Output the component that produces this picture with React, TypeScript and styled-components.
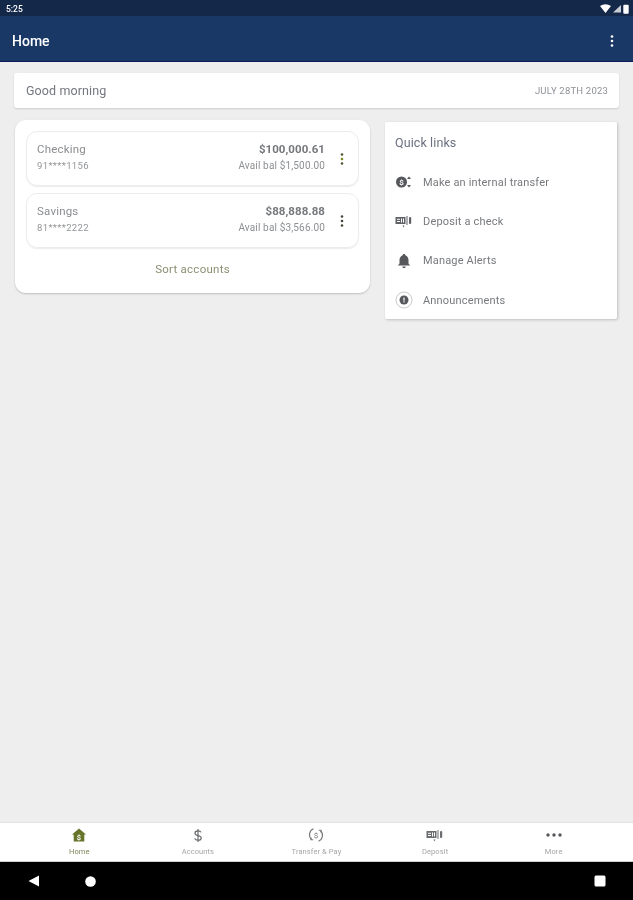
import React from "react";
import styled, { createGlobalStyle } from "styled-components";

const Global = createGlobalStyle`
  html, body { margin: 0; padding: 0; background: #eeeeee; }
  body { font-family: Roboto, "Liberation Sans", sans-serif; }
`;

const Screen = styled.div`
  width: 633px; height: 900px; display: flex; flex-direction: column; overflow: hidden; background: #eeeeee;
  filter: blur(0.45px);
`;
const StatusBar = styled.div`
  flex: none; height: 16px; background: #14284a; display: flex; align-items: center; justify-content: space-between;
  padding: 1px 4px 0 6px; box-sizing: border-box; color: #fff; font-size: 8.5px; font-weight: 500;
`;
const StatusIcons = styled.div`display: flex; align-items: center; gap: 2px;`;
const AppBar = styled.header`
  flex: none; height: 46px; box-sizing: border-box; background: #1a3866; border-bottom: 1.5px solid #0c1c58; display: flex; align-items: center;
  justify-content: space-between; padding: 4px 19px 0 12px; color: #fff;
`;
const AppTitle = styled.div`font-size: 14px; font-weight: 500;`;
const Content = styled.main`
  flex: 1 1 0; display: flex; flex-direction: column; padding: 11px 14px 0 14px; min-height: 0;
`;
const GreetingCard = styled.section`
  height: 35px; background: #fff; border-radius: 3px; box-shadow: 0 1px 2px rgba(0,0,0,.14);
  display: flex; align-items: center; justify-content: space-between; padding: 0 11px 0 12px;
`;
const Greeting = styled.div`font-size: 12.5px; color: #74777f; letter-spacing: .1px;`;
const DateText = styled.div`font-size: 9.5px; color: #8f9197; letter-spacing: .2px;`;
const Columns = styled.div`display: flex; align-items: flex-start; margin-top: 12px; padding: 0 2px 0 1px; gap: 15px;`;
const AccountsCard = styled.section`
  width: 355px; height: 173px; box-sizing: border-box; background: #fff; border-radius: 11px;
  box-shadow: 0 1px 2px rgba(0,0,0,.2); padding: 11px 11px 0; display: flex; flex-direction: column; gap: 7px;
`;
const AccountRow = styled.div`
  height: 55px; box-sizing: border-box; border-radius: 11px; border: 1px solid #ececec;
  box-shadow: 0 1px 1px rgba(0,0,0,.08); display: flex; align-items: center; padding: 0 14px 0 10px; gap: 15px;
`;
const AccountInfo = styled.div`flex: 1; display: flex; flex-direction: column; gap: 4px; margin-top: -5px;`;
const InfoLine = styled.div`display: flex; justify-content: space-between; align-items: baseline;`;
const AccountName = styled.span`font-size: 11.5px; color: #8b8d90; letter-spacing: .2px;`;
const Amount = styled.span`font-size: 11.5px; font-weight: 700; color: #76787c; letter-spacing: .05px;`;
const Masked = styled.span`font-size: 9.5px; color: #939598; letter-spacing: .35px;`;
const Avail = styled.span`font-size: 10px; color: #8d8f92; letter-spacing: .15px;`;
const SortLink = styled.div`
  text-align: center; font-size: 11.5px; color: #8c8f72; letter-spacing: .25px; margin-top: 7px;
`;
const QuickCard = styled.section`
  width: 232px; height: 197px; box-sizing: border-box; margin-top: 2px; background: #fff; border-radius: 2px;
  box-shadow: 1px 1px 3px rgba(0,0,0,.2); padding: 13px 10px 0;
`;
const QuickTitle = styled.div`font-size: 12.5px; color: #6c7080; letter-spacing: .1px; height: 27px;`;
const QuickItem = styled.div`height: 39.3px; display: flex; align-items: center; gap: 10px; padding-top: 1px; box-sizing: border-box;`;
const QuickIcon = styled.div`width: 18px; height: 18px; display: flex; align-items: center; justify-content: center;`;
const QuickLabel = styled.span`font-size: 11px; color: #77797d; letter-spacing: .17px;`;
const BottomNav = styled.nav`
  flex: none; height: 40px; box-sizing: border-box; background: #fff; border-top: 1px solid #e4e4e4; border-bottom: 1px solid #cfcfcf;
  display: grid; grid-template-columns: repeat(5, 118.6px); padding: 0 20px;
`;
const NavItem = styled.div`
  display: flex; flex-direction: column; align-items: center; padding-top: 4px;
`;
const NavIcon = styled.div`height: 16px; display: flex; align-items: center; justify-content: center;`;
const NavLabel = styled.span<{ $active?: boolean }>`
  font-size: 7.5px; margin-top: 4px; letter-spacing: .1px; color: ${p => (p.$active ? "#7d8658" : "#a5a6a8")};
`;
const SystemBar = styled.div`
  flex: none; height: 38px; background: #000; display: flex; align-items: center; justify-content: space-between; padding: 0 27px 0 28px;
`;
const SystemLeft = styled.div`display: flex; align-items: center; gap: 45px;`;

const Dots = ({ c = "#5a5a5a", c2 }: { c?: string; c2?: string }) => (
  <svg width="4" height="14" viewBox="0 0 4 14">
    <circle cx="2" cy="2.5" r="1.3" fill={c} />
    <circle cx="2" cy="7" r="1.3" fill={c2 ?? c} />
    <circle cx="2" cy="11.5" r="1.3" fill={c} />
  </svg>
);

const CheckIcon = ({ size = 18, fill = "#606266" }: { size?: number; fill?: string }) => (
  <svg width={size} height={size} viewBox="0 0 18 18">
    <rect x="0.5" y="5" width="10" height="7" fill={fill} />
    <rect x="2" y="6.8" width="3" height="1" fill="#fff" />
    <rect x="2" y="9" width="3" height="1" fill="#fff" />
    <rect x="6" y="6.5" width="1" height="4" fill="#fff" />
    <rect x="8" y="6.5" width="1" height="4" fill="#fff" />
    <rect x="11.5" y="4" width="1" height="9" fill={fill} />
    <rect x="14" y="5" width="2.2" height="7" rx="1" fill={fill} />
    <path d="M7.500 13.500h2l-1 2z" fill={fill} />
  </svg>
);

const TransferNavIcon = () => (
  <svg width="16" height="16" viewBox="0 0 16 16" fill="none" stroke="#77797c" strokeWidth="1.1">
    <path d="M5.500 1.800A6.300 6.300 0 0 0 3.600 12.400" />
    <path d="M10.500 14.200A6.300 6.300 0 0 0 12.400 3.600" />
    <path d="M3 10.500v2.300h2.200M13 5.500V3.200h-2.200" />
    <text x="8" y="11" textAnchor="middle" fontSize="8" fill="#77797c" stroke="none" fontFamily="Roboto">$</text>
  </svg>
);

export default function App() {
  return (
    <Screen>
      <Global />
      <StatusBar>
        <span>5:25</span>
        <StatusIcons>
          <svg width="11" height="9" viewBox="0 0 11 9"><path d="M0 2 Q5.500 -1.500 11 2 L5.500 9z" fill="#fff" /></svg>
          <svg width="8" height="9" viewBox="0 0 8 9"><path d="M8 1v7.500H0z" fill="#c9ced6" /></svg>
          <svg width="6" height="10" viewBox="0 0 6 10"><rect x="0.300" y="0.800" width="5.400" height="9" rx="1" fill="#fff" /></svg>
        </StatusIcons>
      </StatusBar>
      <AppBar>
        <AppTitle>Home</AppTitle>
        <Dots c="#ffffff" />
      </AppBar>
      <Content>
        <GreetingCard>
          <Greeting>Good morning</Greeting>
          <DateText>JULY 28TH 2023</DateText>
        </GreetingCard>
        <Columns>
          <AccountsCard>
            <AccountRow>
              <AccountInfo>
                <InfoLine><AccountName>Checking</AccountName><Amount>$100,000.61</Amount></InfoLine>
                <InfoLine><Masked>91****1156</Masked><Avail>Avail bal $1,500.00</Avail></InfoLine>
              </AccountInfo>
              <Dots c="#50542f" c2="#7d8a2c" />
            </AccountRow>
            <AccountRow>
              <AccountInfo>
                <InfoLine><AccountName>Savings</AccountName><Amount>$88,888.88</Amount></InfoLine>
                <InfoLine><Masked>81****2222</Masked><Avail>Avail bal $3,566.00</Avail></InfoLine>
              </AccountInfo>
              <Dots c="#45463a" />
            </AccountRow>
            <SortLink>Sort accounts</SortLink>
          </AccountsCard>
          <QuickCard>
            <QuickTitle>Quick links</QuickTitle>
            <QuickItem>
              <QuickIcon>
                <svg width="18" height="18" viewBox="0 0 18 18">
                  <circle cx="6.500" cy="9" r="5.500" fill="#55575a" />
                  <text x="6.500" y="12" textAnchor="middle" fontSize="8" fontWeight="700" fill="#fff" fontFamily="Roboto">$</text>
                  <path d="M14 3.500l2 2.500h-4zM14 14.500l-2-2.500h4z" fill="#55575a" />
                </svg>
              </QuickIcon>
              <QuickLabel>Make an internal transfer</QuickLabel>
            </QuickItem>
            <QuickItem>
              <QuickIcon><CheckIcon /></QuickIcon>
              <QuickLabel>Deposit a check</QuickLabel>
            </QuickItem>
            <QuickItem>
              <QuickIcon>
                <svg width="18" height="18" viewBox="0 0 18 18">
                  <path d="M9 2c.8 0 1.300.6 1.300 1.200C12.400 4 13.500 6 13.500 8v3.500l1.500 2H3l1.500-2V8c0-2 1.100-4 3.200-4.800C7.700 2.600 8.200 2 9 2z" fill="#55575a" />
                  <path d="M7.300 14.500h3.400a1.700 1.700 0 0 1-3.400 0z" fill="#55575a" />
                </svg>
              </QuickIcon>
              <QuickLabel>Manage Alerts</QuickLabel>
            </QuickItem>
            <QuickItem>
              <QuickIcon>
                <svg width="18" height="18" viewBox="0 0 18 18">
                  <circle cx="9" cy="9" r="8" fill="none" stroke="#bdbdbd" strokeWidth="0.8" />
                  <circle cx="9" cy="9" r="4.500" fill="#55575a" />
                  <rect x="8.400" y="6.500" width="1.200" height="3.200" fill="#fff" />
                  <rect x="8.400" y="10.300" width="1.200" height="1.200" fill="#fff" />
                </svg>
              </QuickIcon>
              <QuickLabel>Announcements</QuickLabel>
            </QuickItem>
          </QuickCard>
        </Columns>
      </Content>
      <BottomNav>
        <NavItem>
          <NavIcon>
            <svg width="16" height="16" viewBox="0 0 16 16">
              <path d="M8 1.500L15 7.500h-1.700V14.500H2.700V7.500H1z" fill="#66752a" />
              <text x="8" y="12.500" textAnchor="middle" fontSize="7.500" fontWeight="700" fill="#fff" fontFamily="Roboto">$</text>
            </svg>
          </NavIcon>
          <NavLabel $active>Home</NavLabel>
        </NavItem>
        <NavItem>
          <NavIcon>
            <svg width="14" height="15" viewBox="0 0 16 16" fill="none" stroke="#66686b" strokeWidth="1.300">
              <path d="M8 .5v15M11.500 4.500C11 3 9.500 2.700 8 2.700c-2 0-3.500 1-3.500 2.600S6 7.500 8 8s3.700 1.100 3.700 2.800-1.700 2.600-3.700 2.600c-1.700 0-3.300-.6-3.800-2.100" />
            </svg>
          </NavIcon>
          <NavLabel>Accounts</NavLabel>
        </NavItem>
        <NavItem>
          <NavIcon><TransferNavIcon /></NavIcon>
          <NavLabel>Transfer &amp; Pay</NavLabel>
        </NavItem>
        <NavItem>
          <NavIcon><CheckIcon size={18} fill="#6a6c6f" /></NavIcon>
          <NavLabel>Deposit</NavLabel>
        </NavItem>
        <NavItem>
          <NavIcon>
            <svg width="18" height="6" viewBox="0 0 18 6" fill="#55575a">
              <circle cx="3" cy="3" r="1.700" /><circle cx="9" cy="3" r="1.700" /><circle cx="15" cy="3" r="1.700" />
            </svg>
          </NavIcon>
          <NavLabel>More</NavLabel>
        </NavItem>
      </BottomNav>
      <SystemBar>
        <SystemLeft>
          <svg width="12" height="12" viewBox="0 0 12 12"><path d="M11 .5v11L.5 6z" fill="#fff" /></svg>
          <svg width="11" height="11" viewBox="0 0 11 11"><circle cx="5.500" cy="5.500" r="5.300" fill="#fff" /></svg>
        </SystemLeft>
        <svg width="12" height="12" viewBox="0 0 12 12"><rect x=".5" y=".5" width="11" height="11" rx="1.500" fill="#fff" /></svg>
      </SystemBar>
    </Screen>
  );
}
